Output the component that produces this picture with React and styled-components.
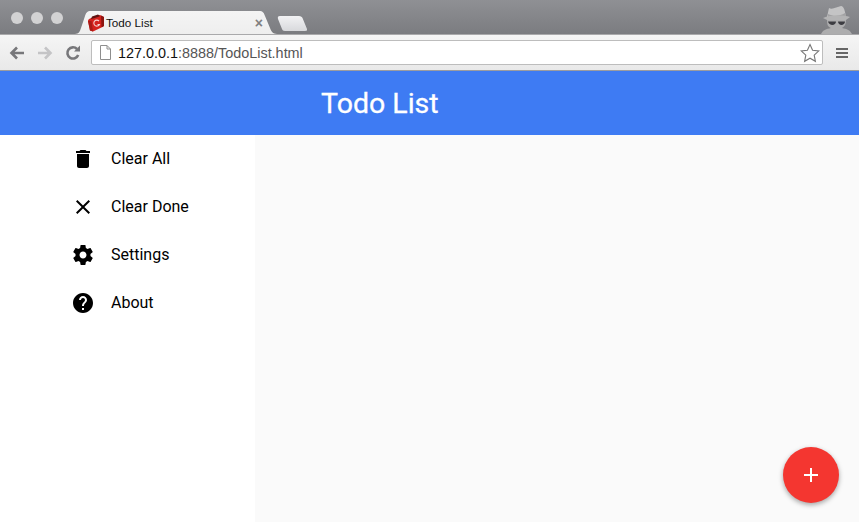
import React from "react";
import styled, { createGlobalStyle } from "styled-components";

const GlobalStyle = createGlobalStyle`
  html, body {
    margin: 0;
    padding: 0;
    height: 100%;
    overflow: hidden;
    background: #fafafa;
  }
`;

const Page = styled.div`
  position: relative;
  display: flex;
  flex-direction: column;
  height: 522px;
  overflow: hidden;
  font-family: Roboto, sans-serif;
`;

const TabStrip = styled.div`
  display: flex;
  align-items: flex-end;
  height: 34px;
  padding-left: 11px;
  padding-right: 6px;
  background: linear-gradient(#8f9094, #7b7c80);
`;

const Lights = styled.div`
  display: flex;
  gap: 8px;
  align-self: center;
  margin-top: 2px;
`;

const Light = styled.span`
  width: 12px;
  height: 12px;
  border-radius: 50%;
  background: #d2d2d3;
`;

const Tab = styled.div`
  display: flex;
  align-items: center;
  width: 202px;
  height: 23px;
  margin-left: 12px;
  padding: 0 14px 0 12px;
  box-sizing: border-box;
  background: linear-gradient(#f4f4f4, #eeeeee);
  clip-path: path("M0 23 C4 23 5 20 6 17 L10 5 C11 2 12 0 16 0 L184 0 C188 0 189 2 190 5 L195 17 C196 20 198 23 202 23 Z");
`;

const TabTitle = styled.span`
  margin-left: 1px;
  font: 11.7px "Liberation Sans", sans-serif;
  color: #111;
  flex: 1;
`;

const TabClose = styled.span`
  font: bold 14px "Liberation Sans", sans-serif;
  color: #807f80;
`;

const NewTab = styled.div`
  width: 30px;
  height: 15px;
  margin-bottom: 3px;
  background: linear-gradient(#f2f2f4, #d8d9dc);
  clip-path: path("M3 0 L22 0 C24 0 25 1 25.5 2 L30 13 C30.5 14 30 15 28 15 L8 15 C6 15 5.5 14 5 13 L1 3 C0.5 1 1 0 3 0 Z");
`;

const Incognito = styled.svg`
  margin-left: auto;
  display: block;
`;

const Toolbar = styled.div`
  display: flex;
  align-items: center;
  height: 37px;
  box-sizing: border-box;
  padding: 0 8px 0 8px;
  background: linear-gradient(#f5f5f5, #e9e9e9);
  border-top: 1px solid #a9a9ab;
  border-bottom: 1px solid #9c9c9e;
`;

const NavButtons = styled.div`
  display: flex;
  align-items: center;
  gap: 10px;
  width: 83px;
`;

const Omnibox = styled.div`
  display: flex;
  align-items: center;
  width: 732px;
  height: 25px;
  box-sizing: border-box;
  padding: 0 2px 0 7px;
  background: #fff;
  border: 1px solid #bdbdbd;
  border-radius: 2px;
`;

const Url = styled.span`
  margin-left: 6px;
  flex: 1;
  font: 14.4px "Liberation Sans", sans-serif;
  color: #555;
`;

const Host = styled.span`
  color: #111;
`;

const Menu = styled.div`
  display: flex;
  flex-direction: column;
  gap: 2px;
  margin-left: 13px;
`;

const MenuBar = styled.span`
  width: 12px;
  height: 2px;
  background: #666;
`;

const Header = styled.header`
  display: flex;
  align-items: center;
  height: 64px;
  padding-left: 321px;
  background: #3e7bf3;
`;

const Title = styled.h1`
  margin: 0;
  font-size: 28.5px;
  font-weight: 400;
  color: #fff;
  -webkit-text-stroke: 0.3px #fff;
`;

const Body = styled.div`
  display: flex;
  flex: 1;
`;

const Sidebar = styled.nav`
  width: 255px;
  background: #fff;
`;

const Content = styled.main`
  flex: 1;
  background: #fafafa;
`;

const NavItem = styled.div`
  display: flex;
  align-items: center;
  height: 48px;
  padding-left: 71px;
`;

const NavLabel = styled.span`
  margin-left: 16px;
  margin-bottom: 2px;
  font-size: 16px;
  color: #000;
`;

const Fab = styled.button`
  position: absolute;
  right: 20px;
  bottom: 19px;
  display: flex;
  align-items: center;
  justify-content: center;
  width: 56px;
  height: 56px;
  padding: 0;
  border: none;
  border-radius: 50%;
  background: #f43630;
  box-shadow: 0 2px 5px rgba(0, 0, 0, 0.35);
`;

const items = [
  {
    label: "Clear All",
    d: "M6 19c0 1.1.9 2 2 2h8c1.1 0 2-.9 2-2V7H6v12zM19 4h-3.5l-1-1h-5l-1 1H5v2h14V4z",
  },
  {
    label: "Clear Done",
    d: "M19 6.41L17.59 5 12 10.59 6.41 5 5 6.41 10.59 12 5 17.59 6.41 19 12 13.41 17.59 19 19 17.59 13.41 12z",
  },
  {
    label: "Settings",
    d: "M19.43 12.98c.04-.32.07-.64.07-.98s-.03-.66-.07-.98l2.11-1.65c.19-.15.24-.42.12-.64l-2-3.46c-.12-.22-.39-.3-.61-.22l-2.49 1c-.52-.4-1.08-.73-1.69-.98l-.38-2.65C14.46 2.18 14.25 2 14 2h-4c-.25 0-.46.18-.49.42l-.38 2.65c-.61.25-1.17.59-1.69.98l-2.49-1c-.23-.09-.49 0-.61.22l-2 3.46c-.13.22-.07.49.12.64l2.11 1.65c-.04.32-.07.65-.07.98s.03.66.07.98l-2.11 1.65c-.19.15-.24.42-.12.64l2 3.46c.12.22.39.3.61.22l2.49-1c.52.4 1.08.73 1.69.98l.38 2.65c.03.24.24.42.49.42h4c.25 0 .46-.18.49-.42l.38-2.65c.61-.25 1.17-.59 1.69-.98l2.49 1c.23.09.49 0 .61-.22l2-3.46c.12-.22.07-.49-.12-.64l-2.11-1.65zM12 15.5c-1.93 0-3.5-1.57-3.5-3.5s1.57-3.5 3.5-3.5 3.5 1.57 3.5 3.5-1.57 3.5-3.5 3.5z",
  },
  {
    label: "About",
    d: "M12 2C6.48 2 2 6.48 2 12s4.48 10 10 10 10-4.48 10-10S17.52 2 12 2zm1 17h-2v-2h2v2zm2.07-7.75l-.9.92C13.45 12.9 13 13.5 13 15h-2v-.5c0-1.1.45-2.1 1.17-2.83l1.24-1.26c.37-.36.59-.86.59-1.41 0-1.1-.9-2-2-2s-2 .9-2 2H8c0-2.21 1.79-4 4-4s4 1.79 4 4c0 .88-.36 1.68-.93 2.25z",
  },
];

const Favicon = () => (
  <svg width="18" height="18" viewBox="0 0 18 18">
    <path d="M1 7 C1 5.5 2 5 3 4.5 L13 1 L17 3 L17 11 C17 12 16.5 12.5 15.5 13 L6 17.5 L3 16.5 Z" fill="#d3211c" />
    <path d="M14 1.5 L17 3 L17 11 C17 12 16.5 12.5 15.5 13 L14.5 13 Z" fill="#8c1612" />
    <path d="M4 5 L5 2.5 L11 .5 L13 2 L11 3 L6 4.5 Z" fill="#5e1210" />
    <path d="M1 7 L3 16.5 L6 17.5 L4.5 7 Z" fill="#a81a16" />
    <path d="M12 7 A3 3 0 1 0 12.5 10.5 L10.5 10.5" fill="none" stroke="#f6d0cd" strokeWidth="1.1" />
  </svg>
);

const App = () => {
  return (
    <Page>
      <GlobalStyle />
      <TabStrip>
        <Lights>
          <Light />
          <Light />
          <Light />
        </Lights>
        <Tab>
          <Favicon />
          <TabTitle>Todo List</TabTitle>
          <TabClose>×</TabClose>
        </Tab>
        <NewTab />
        <Incognito width="33" height="29" viewBox="0 0 33 29">
          <path d="M7 12 L9 3 C12 5 17 2 21 1 C24 1 25 6 26 12 Z" fill="#c4c4c5" />
          <path d="M8 9 C14 12 20 11 25 8 L26 11 L8 12 Z" fill="#a2a2a4" />
          <path d="M3 13 C10 10 23 10 30 12 L26 15 L7 15 Z" fill="#b3b3b4" />
          <path d="M7 15 H26 C26 20 24 22 22 23 C27 24 30 25 32 29 H1 C3 25 6 24 11 23 C8 22 7 20 7 15 Z" fill="#adadae" />
          <path d="M8 16.5 H16 C16 21 9 21 8 16.5 Z M18 16.5 H25 C25 21 18 21 18 16.5 Z" fill="#3c3c41" />
        </Incognito>
      </TabStrip>
      <Toolbar>
        <NavButtons>
          <svg width="18" height="18" viewBox="0 0 18 18">
            <path d="M16 9 H4 M9 3.5 L3.5 9 L9 14.5" fill="none" stroke="#77777a" strokeWidth="2.6" />
          </svg>
          <svg width="18" height="18" viewBox="0 0 18 18">
            <path d="M2 9 H14 M9 3.5 L14.5 9 L9 14.5" fill="none" stroke="#c4c4c6" strokeWidth="2.6" />
          </svg>
          <svg width="18" height="18" viewBox="0 0 18 18">
            <path d="M14.2 11 A5.6 5.6 0 1 1 13 5" fill="none" stroke="#77777a" strokeWidth="2.6" />
            <path d="M10 7.5 H16 V1.5 Z" fill="#77777a" />
          </svg>
        </NavButtons>
        <Omnibox>
          <svg width="13" height="15" viewBox="0 0 13 15">
            <path d="M1.5 .5 H8 L11.5 4 V14.5 H1.5 Z M8 .5 V4 H11.5" fill="#fff" stroke="#8e8e8e" />
          </svg>
          <Url>
            <Host>127.0.0.1</Host>:8888/TodoList.html
          </Url>
          <svg width="20" height="20" viewBox="0 0 20 20">
            <path d="M10 1.5 L12.6 7.2 L18.8 7.9 L14.2 12.1 L15.4 18.3 L10 15.2 L4.6 18.3 L5.8 12.1 L1.2 7.9 L7.4 7.2 Z" fill="#fff" stroke="#777" strokeWidth="1.1" />
          </svg>
        </Omnibox>
        <Menu>
          <MenuBar />
          <MenuBar />
          <MenuBar />
        </Menu>
      </Toolbar>
      <Header>
        <Title>Todo List</Title>
      </Header>
      <Body>
        <Sidebar>
          {items.map((item) => (
            <NavItem key={item.label}>
              <svg width="24" height="24" viewBox="0 0 24 24">
                <path d={item.d} fill="#000" />
              </svg>
              <NavLabel>{item.label}</NavLabel>
            </NavItem>
          ))}
        </Sidebar>
        <Content />
      </Body>
      <Fab>
        <svg width="24" height="24" viewBox="0 0 24 24">
          <path d="M19 13h-6v6h-2v-6H5v-2h6V5h2v6h6v2z" fill="#fff" />
        </svg>
      </Fab>
    </Page>
  );
};

export default App;
